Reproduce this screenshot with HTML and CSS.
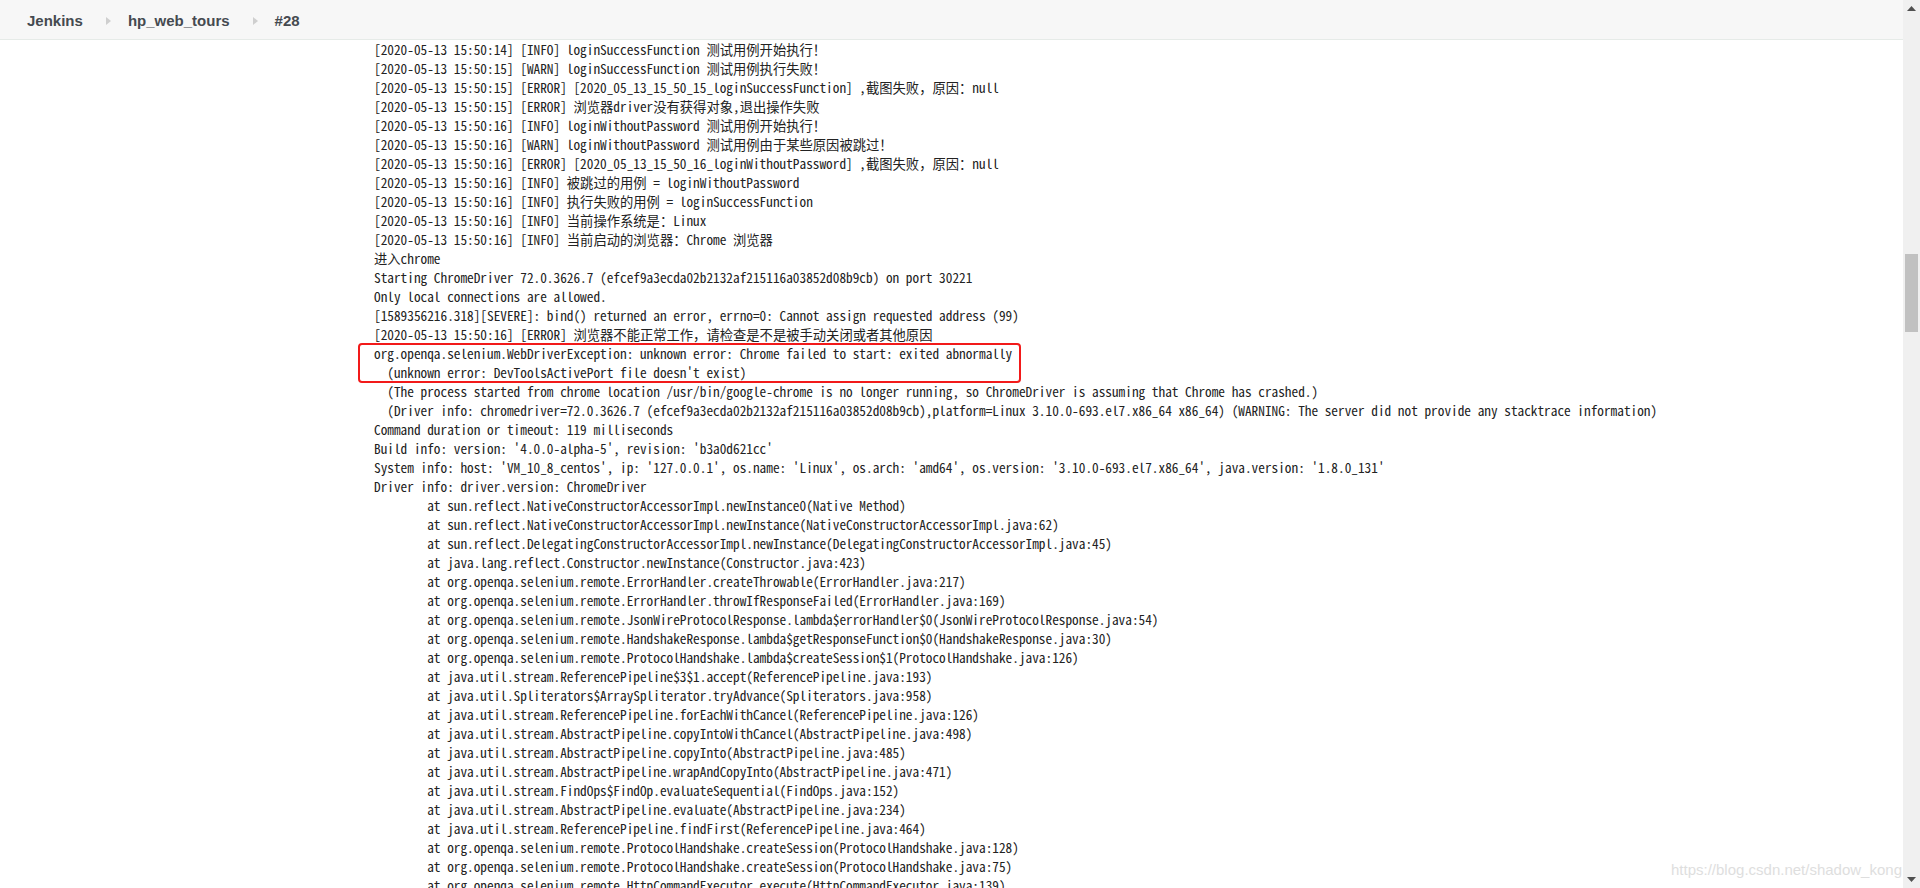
FILE: index.html
```html
<!DOCTYPE html>
<html lang="zh-CN">
<head>
<meta charset="utf-8">
<title>hp_web_tours #28 Console [Jenkins]</title>
<link rel="stylesheet" href="styles.css">
</head>
<body>
<div class="page">
  <header class="top">
    <nav class="crumbs">
      <a class="crumb">Jenkins</a>
      <svg class="sep" width="5" height="8" viewBox="0 0 5 8"><path d="M0 0 L5 4 L0 8 Z" fill="#cfcfcf"/></svg>
      <a class="crumb">hp_web_tours</a>
      <svg class="sep" width="5" height="8" viewBox="0 0 5 8"><path d="M0 0 L5 4 L0 8 Z" fill="#cfcfcf"/></svg>
      <a class="crumb">#28</a>
    </nav>
  </header>
  <main class="console">
    <div class="log">
<div class="ln">[2020-05-13 15:50:14] [INFO] loginSuccessFunction 测试用例开始执行！</div>
<div class="ln">[2020-05-13 15:50:15] [WARN] loginSuccessFunction 测试用例执行失败！</div>
<div class="ln">[2020-05-13 15:50:15] [ERROR] [2020_05_13_15_50_15_loginSuccessFunction] ,截图失败，原因：null</div>
<div class="ln">[2020-05-13 15:50:15] [ERROR] 浏览器driver没有获得对象,退出操作失败</div>
<div class="ln">[2020-05-13 15:50:16] [INFO] loginWithoutPassword 测试用例开始执行！</div>
<div class="ln">[2020-05-13 15:50:16] [WARN] loginWithoutPassword 测试用例由于某些原因被跳过！</div>
<div class="ln">[2020-05-13 15:50:16] [ERROR] [2020_05_13_15_50_16_loginWithoutPassword] ,截图失败，原因：null</div>
<div class="ln">[2020-05-13 15:50:16] [INFO] 被跳过的用例 = loginWithoutPassword</div>
<div class="ln">[2020-05-13 15:50:16] [INFO] 执行失败的用例 = loginSuccessFunction</div>
<div class="ln">[2020-05-13 15:50:16] [INFO] 当前操作系统是：Linux</div>
<div class="ln">[2020-05-13 15:50:16] [INFO] 当前启动的浏览器：Chrome 浏览器</div>
<div class="ln">进入chrome</div>
<div class="ln">Starting ChromeDriver 72.0.3626.7 (efcef9a3ecda02b2132af215116a03852d08b9cb) on port 30221</div>
<div class="ln">Only local connections are allowed.</div>
<div class="ln">[1589356216.318][SEVERE]: bind() returned an error, errno=0: Cannot assign requested address (99)</div>
<div class="ln">[2020-05-13 15:50:16] [ERROR] 浏览器不能正常工作，请检查是不是被手动关闭或者其他原因</div>
<div class="mark">
<div class="ln">org.openqa.selenium.WebDriverException: unknown error: Chrome failed to start: exited abnormally</div>
<div class="ln">  (unknown error: DevToolsActivePort file doesn't exist)</div>
</div>
<div class="ln">  (The process started from chrome location /usr/bin/google-chrome is no longer running, so ChromeDriver is assuming that Chrome has crashed.)</div>
<div class="ln">  (Driver info: chromedriver=72.0.3626.7 (efcef9a3ecda02b2132af215116a03852d08b9cb),platform=Linux 3.10.0-693.el7.x86_64 x86_64) (WARNING: The server did not provide any stacktrace information)</div>
<div class="ln">Command duration or timeout: 119 milliseconds</div>
<div class="ln">Build info: version: '4.0.0-alpha-5', revision: 'b3a0d621cc'</div>
<div class="ln">System info: host: 'VM_10_8_centos', ip: '127.0.0.1', os.name: 'Linux', os.arch: 'amd64', os.version: '3.10.0-693.el7.x86_64', java.version: '1.8.0_131'</div>
<div class="ln">Driver info: driver.version: ChromeDriver</div>
<div class="ln">	at sun.reflect.NativeConstructorAccessorImpl.newInstance0(Native Method)</div>
<div class="ln">	at sun.reflect.NativeConstructorAccessorImpl.newInstance(NativeConstructorAccessorImpl.java:62)</div>
<div class="ln">	at sun.reflect.DelegatingConstructorAccessorImpl.newInstance(DelegatingConstructorAccessorImpl.java:45)</div>
<div class="ln">	at java.lang.reflect.Constructor.newInstance(Constructor.java:423)</div>
<div class="ln">	at org.openqa.selenium.remote.ErrorHandler.createThrowable(ErrorHandler.java:217)</div>
<div class="ln">	at org.openqa.selenium.remote.ErrorHandler.throwIfResponseFailed(ErrorHandler.java:169)</div>
<div class="ln">	at org.openqa.selenium.remote.JsonWireProtocolResponse.lambda$errorHandler$0(JsonWireProtocolResponse.java:54)</div>
<div class="ln">	at org.openqa.selenium.remote.HandshakeResponse.lambda$getResponseFunction$0(HandshakeResponse.java:30)</div>
<div class="ln">	at org.openqa.selenium.remote.ProtocolHandshake.lambda$createSession$1(ProtocolHandshake.java:126)</div>
<div class="ln">	at java.util.stream.ReferencePipeline$3$1.accept(ReferencePipeline.java:193)</div>
<div class="ln">	at java.util.Spliterators$ArraySpliterator.tryAdvance(Spliterators.java:958)</div>
<div class="ln">	at java.util.stream.ReferencePipeline.forEachWithCancel(ReferencePipeline.java:126)</div>
<div class="ln">	at java.util.stream.AbstractPipeline.copyIntoWithCancel(AbstractPipeline.java:498)</div>
<div class="ln">	at java.util.stream.AbstractPipeline.copyInto(AbstractPipeline.java:485)</div>
<div class="ln">	at java.util.stream.AbstractPipeline.wrapAndCopyInto(AbstractPipeline.java:471)</div>
<div class="ln">	at java.util.stream.FindOps$FindOp.evaluateSequential(FindOps.java:152)</div>
<div class="ln">	at java.util.stream.AbstractPipeline.evaluate(AbstractPipeline.java:234)</div>
<div class="ln">	at java.util.stream.ReferencePipeline.findFirst(ReferencePipeline.java:464)</div>
<div class="ln">	at org.openqa.selenium.remote.ProtocolHandshake.createSession(ProtocolHandshake.java:128)</div>
<div class="ln">	at org.openqa.selenium.remote.ProtocolHandshake.createSession(ProtocolHandshake.java:75)</div>
<div class="ln">	at org.openqa.selenium.remote.HttpCommandExecutor.execute(HttpCommandExecutor.java:139)</div>
    </div>
    <div class="watermark">https://blog.csdn.net/shadow_kong</div>
  </main>
</div>
<div class="scrollbar">
  <svg class="arrow" width="9" height="5" viewBox="0 0 9 5"><path d="M0 5 L4.5 0 L9 5 Z" fill="#505050"/></svg>
  <div class="track"><div class="thumb"></div></div>
  <svg class="arrow" width="9" height="5" viewBox="0 0 9 5"><path d="M0 0 L4.5 5 L9 0 Z" fill="#505050"/></svg>
</div>
</body>
</html>
```
FILE: styles.css
```css
html, body {
  margin: 0;
  padding: 0;
  height: 888px;
  overflow: hidden;
  background: #ffffff;
}

body {
  display: flex;
  flex-direction: row;
}

.page {
  flex: 1;
  display: flex;
  flex-direction: column;
  min-width: 0;
  position: relative;
}

.top {
  height: 39px;
  background: #f7f7f7;
  border-bottom: 1px solid #e6ebe8;
  display: flex;
  align-items: center;
  padding-left: 27px;
  flex-shrink: 0;
}

.crumbs {
  display: flex;
  align-items: center;
  font-family: "Liberation Sans", Arial, sans-serif;
  font-weight: 700;
  font-size: 15px;
  color: #454a50;
  padding-top: 2px;
}

.crumb {
  color: inherit;
  text-decoration: none;
}

.sep {
  margin: 0 17px 0 23px;
  display: block;
}

.console {
  flex: 1;
  padding-left: 374px;
  position: relative;
  overflow: hidden;
}

.log {
  font-family: "Noto Sans Mono CJK SC", "Liberation Mono", "Noto Sans CJK SC", monospace;
  font-size: 13.3px;
  line-height: 19px;
  color: #222222;
}

.ln {
  height: 19px;
  white-space: pre;
  tab-size: 8;
  -moz-tab-size: 8;
}

.mark {
  width: fit-content;
  margin-left: -15px;
  padding-left: 15px;
  padding-right: 8px;
  outline: 2px solid #f21a1a;
  outline-offset: -1px;
  border-radius: 3px;
}

.watermark {
  position: absolute;
  right: 1px;
  bottom: 10px;
  font-family: "Liberation Sans", Arial, sans-serif;
  font-size: 15px;
  color: #dedede;
}

.scrollbar {
  width: 17px;
  flex-shrink: 0;
  background: #f0f0f0;
  display: flex;
  flex-direction: column;
  align-items: center;
}

.arrow {
  display: block;
  margin: 6px 0;
}

.track {
  flex: 1;
  width: 100%;
  padding-top: 237px;
  box-sizing: border-box;
}

.thumb {
  margin: 0 2px;
  height: 78px;
  background: #c1c1c1;
}
```
